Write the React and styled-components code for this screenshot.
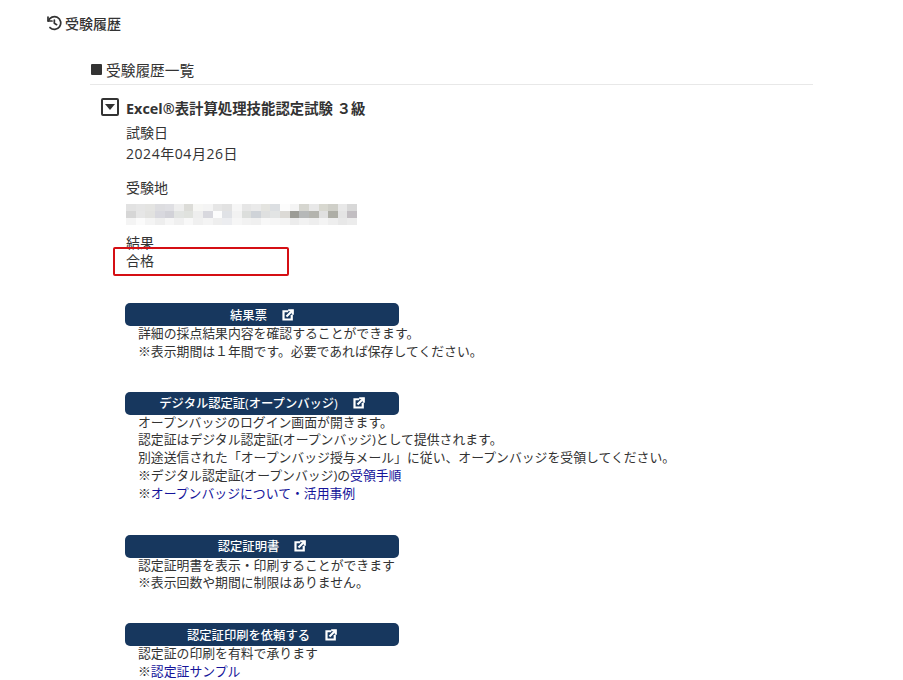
import React from 'react';
import styled, { createGlobalStyle } from 'styled-components';

const GlobalStyle = createGlobalStyle`
    html, body {
        margin: 0;
        padding: 0;
        background: #fff;
        overflow: hidden;
    }
    body {
        font-family: "Open Sans", "Noto Sans CJK JP", sans-serif;
        font-size: 14px;
        color: #333;
    }
`;

const Page = styled.div`
    width: 903px;
    height: 680px;
    overflow: hidden;
    padding: 14px 0 0 46px;
    box-sizing: border-box;
`;

const PageTitle = styled.h1`
    display: flex;
    align-items: center;
    gap: 3px;
    margin: 0 0 25px;
    height: 18px;
    font-size: 14px;
    font-weight: 500;
    color: #333;
`;

const Section = styled.section`
    margin-left: 44px;
    width: 723px;
`;

const SectionTitle = styled.h2`
    display: flex;
    align-items: center;
    gap: 4px;
    margin: 0 0 12px;
    height: 28px;
    padding: 0 0 2px 1px;
    box-sizing: border-box;
    font-size: 14.7px;
    font-weight: 400;
    border-bottom: 1px solid #e8e8e8;
`;

const Bullet = styled.span`
    width: 11px;
    height: 11px;
    border-radius: 1px;
    background: #333;
`;

const Exam = styled.div`
    margin-left: 11px;
`;

const ExamTitle = styled.div`
    display: flex;
    align-items: center;
    gap: 7px;
    height: 20px;
    font-size: 14.4px;
    font-weight: 700;
    margin-bottom: 7px;
`;

const Toggle = styled.span`
    display: flex;
    align-items: center;
    justify-content: center;
    width: 14px;
    height: 14px;
    border: 2px solid #333;
    border-radius: 2px;

    &::after {
        content: '';
        border-left: 5px solid transparent;
        border-right: 5px solid transparent;
        border-top: 6px solid #333;
    }
`;

const Fields = styled.dl`
    margin: 0 0 0 24px;
`;

const Field = styled.div`
    position: relative;
    padding-left: 1px;
    margin-bottom: ${(p) => p.$gap}px;
`;

const Label = styled.dt`
    line-height: 18px;
    height: 18px;
    margin-bottom: 3px;
`;

const ResultLabel = styled(Label)`
    margin-bottom: 0;
`;

const Value = styled.dd`
    margin: 0;
    line-height: 18px;
    height: 18px;
`;

const DateValue = styled(Value)`
    letter-spacing: 0.55px;
`;

const MosaicValue = styled(Value)`
    height: 21px;
    margin-top: 7px;

    svg {
        display: block;
    }
`;

const Highlight = styled.div`
    position: absolute;
    left: -12px;
    top: 13px;
    width: 172px;
    height: 25px;
    border: 2px solid #d50f14;
    border-radius: 2px;
`;

const Action = styled.div`
    margin-bottom: ${(p) => p.$gap}px;
`;

const ActionButton = styled.a`
    display: flex;
    align-items: center;
    justify-content: center;
    gap: 15px;
    width: 274px;
    height: 23px;
    border-radius: 5px;
    background: #17375e;
    color: #fff;
    font-size: 12.3px;
    font-weight: 500;
    text-decoration: none;
`;

const Notes = styled.div`
    margin: -1px 0 0 13px;
    font-size: 12.85px;
    line-height: 17.8px;
`;

const NoteLine = styled.div`
    white-space: nowrap;
`;

const NoteLink = styled.a`
    color: #14149a;
    text-decoration: none;
`;

const HistoryIcon = () => (
    <svg width="16" height="16" viewBox="0 0 24 24" fill="none" stroke="#333" strokeWidth="2.6" strokeLinecap="round" strokeLinejoin="round">
        <path d="M3 3v6h6" />
        <path d="M3.6 9A9.5 9.5 0 1 1 6 18.8" />
        <path d="M12.5 7.5v5l3.5 2" />
    </svg>
);

const ExternalIcon = () => (
    <svg width="12" height="12" viewBox="0 0 24 24" fill="none" stroke="#fff" strokeWidth="4.4" strokeLinecap="square">
        <path d="M10 4.5H3v16.5h16.5V14" />
        <path d="M10.5 13.5 20 4" />
        <path d="M14.5 2.5h7v7" />
    </svg>
);

// mosaic cells of the censored address
const mosaic = [
    ['#e2e2e2', '#e5e5e5', '#e4e4e2', '#dddde0', '#dfdfe3', '#eeeeee', '#dcdcd8', '#f6f6f4', '#f4f4f4', '#e6e6e6', '#e2e2e2', '#f6f6f6', '#e6e6e6', '#eaeaea', '#e4e4e0', '#dcdfe2', '#fcfcfc', '#f4f4f4', '#d6d6d0', '#e8e8e8', '#d8d8d0', '#cfcfc8', '#e8e8e8', '#d8d8d8'],
    ['#d6d6d6', '#e6e6e6', '#e2e2e0', '#d8d8de', '#d2d2d8', '#e2e4e2', '#e0e2de', '#eeeeee', '#d8d8de', '#fcfcfc', '#e0e2e6', '#f2f2f2', '#dcdedc', '#cfd3d8', '#dfe0e0', '#e2e4e4', '#dcdad6', '#9c9c96', '#b6b8b8', '#b4b4ae', '#e0e0e0', '#aeaea6', '#e4e4e4', '#c2bec2'],
    ['#f4f4f4', '#fbfbfb', '#f4f4f4', '#eeeeee', '#f6f6f6', '#f0f0f0', '#f8f8f8', '#f0f0f0', '#f4f4f4', '#eeeeee', '#ecedf0', '#f6f6f6', '#f2f2f2', '#f0f0f0', '#f8f8f8', '#f6f6f6', '#f4f4f4', '#ececec', '#f2f2f2', '#eeeeee', '#f4f4f4', '#eeeeee', '#e8e8e8', '#ececec'],
];

const Mosaic = () => (
    <svg width="231" height="21" viewBox="0 0 232 21" shapeRendering="crispEdges">
        {mosaic.map((row, y) =>
            row.map((c, x) => <rect key={`${x}-${y}`} x={x * 9.67} y={y * 7} width="9.67" height="7" fill={c} />)
        )}
    </svg>
);

const App = () => (
    <Page>
        <GlobalStyle />
        <PageTitle><HistoryIcon />受験履歴</PageTitle>
        <Section>
            <SectionTitle><Bullet />受験履歴一覧</SectionTitle>
            <Exam>
                <ExamTitle><Toggle />Excel®表計算処理技能認定試験 ３級</ExamTitle>
                <Fields>
                    <Field $gap={16}>
                        <Label>試験日</Label>
                        <DateValue>2024年04月26日</DateValue>
                    </Field>
                    <Field $gap={9}>
                        <Label>受験地</Label>
                        <MosaicValue><Mosaic /></MosaicValue>
                    </Field>
                    <Field $gap={33}>
                        <ResultLabel>結果</ResultLabel>
                        <Value>合格</Value>
                        <Highlight />
                    </Field>
                    <Action $gap={31}>
                        <ActionButton>結果票<ExternalIcon /></ActionButton>
                        <Notes>
                            <NoteLine>詳細の採点結果内容を確認することができます。</NoteLine>
                            <NoteLine>※表示期間は１年間です。必要であれば保存してください。</NoteLine>
                        </Notes>
                    </Action>
                    <Action $gap={32}>
                        <ActionButton>デジタル認定証(オープンバッジ)<ExternalIcon /></ActionButton>
                        <Notes>
                            <NoteLine>オープンバッジのログイン画面が開きます。</NoteLine>
                            <NoteLine>認定証はデジタル認定証(オープンバッジ)として提供されます。</NoteLine>
                            <NoteLine>別途送信された「オープンバッジ授与メール」に従い、オープンバッジを受領してください。</NoteLine>
                            <NoteLine>※デジタル認定証(オープンバッジ)の<NoteLink>受領手順</NoteLink></NoteLine>
                            <NoteLine>※<NoteLink>オープンバッジについて・活用事例</NoteLink></NoteLine>
                        </Notes>
                    </Action>
                    <Action $gap={31}>
                        <ActionButton>認定証明書<ExternalIcon /></ActionButton>
                        <Notes>
                            <NoteLine>認定証明書を表示・印刷することができます</NoteLine>
                            <NoteLine>※表示回数や期間に制限はありません。</NoteLine>
                        </Notes>
                    </Action>
                    <Action $gap={0}>
                        <ActionButton>認定証印刷を依頼する<ExternalIcon /></ActionButton>
                        <Notes>
                            <NoteLine>認定証の印刷を有料で承ります</NoteLine>
                            <NoteLine>※<NoteLink>認定証サンプル</NoteLink></NoteLine>
                        </Notes>
                    </Action>
                </Fields>
            </Exam>
        </Section>
    </Page>
);

export default App;
